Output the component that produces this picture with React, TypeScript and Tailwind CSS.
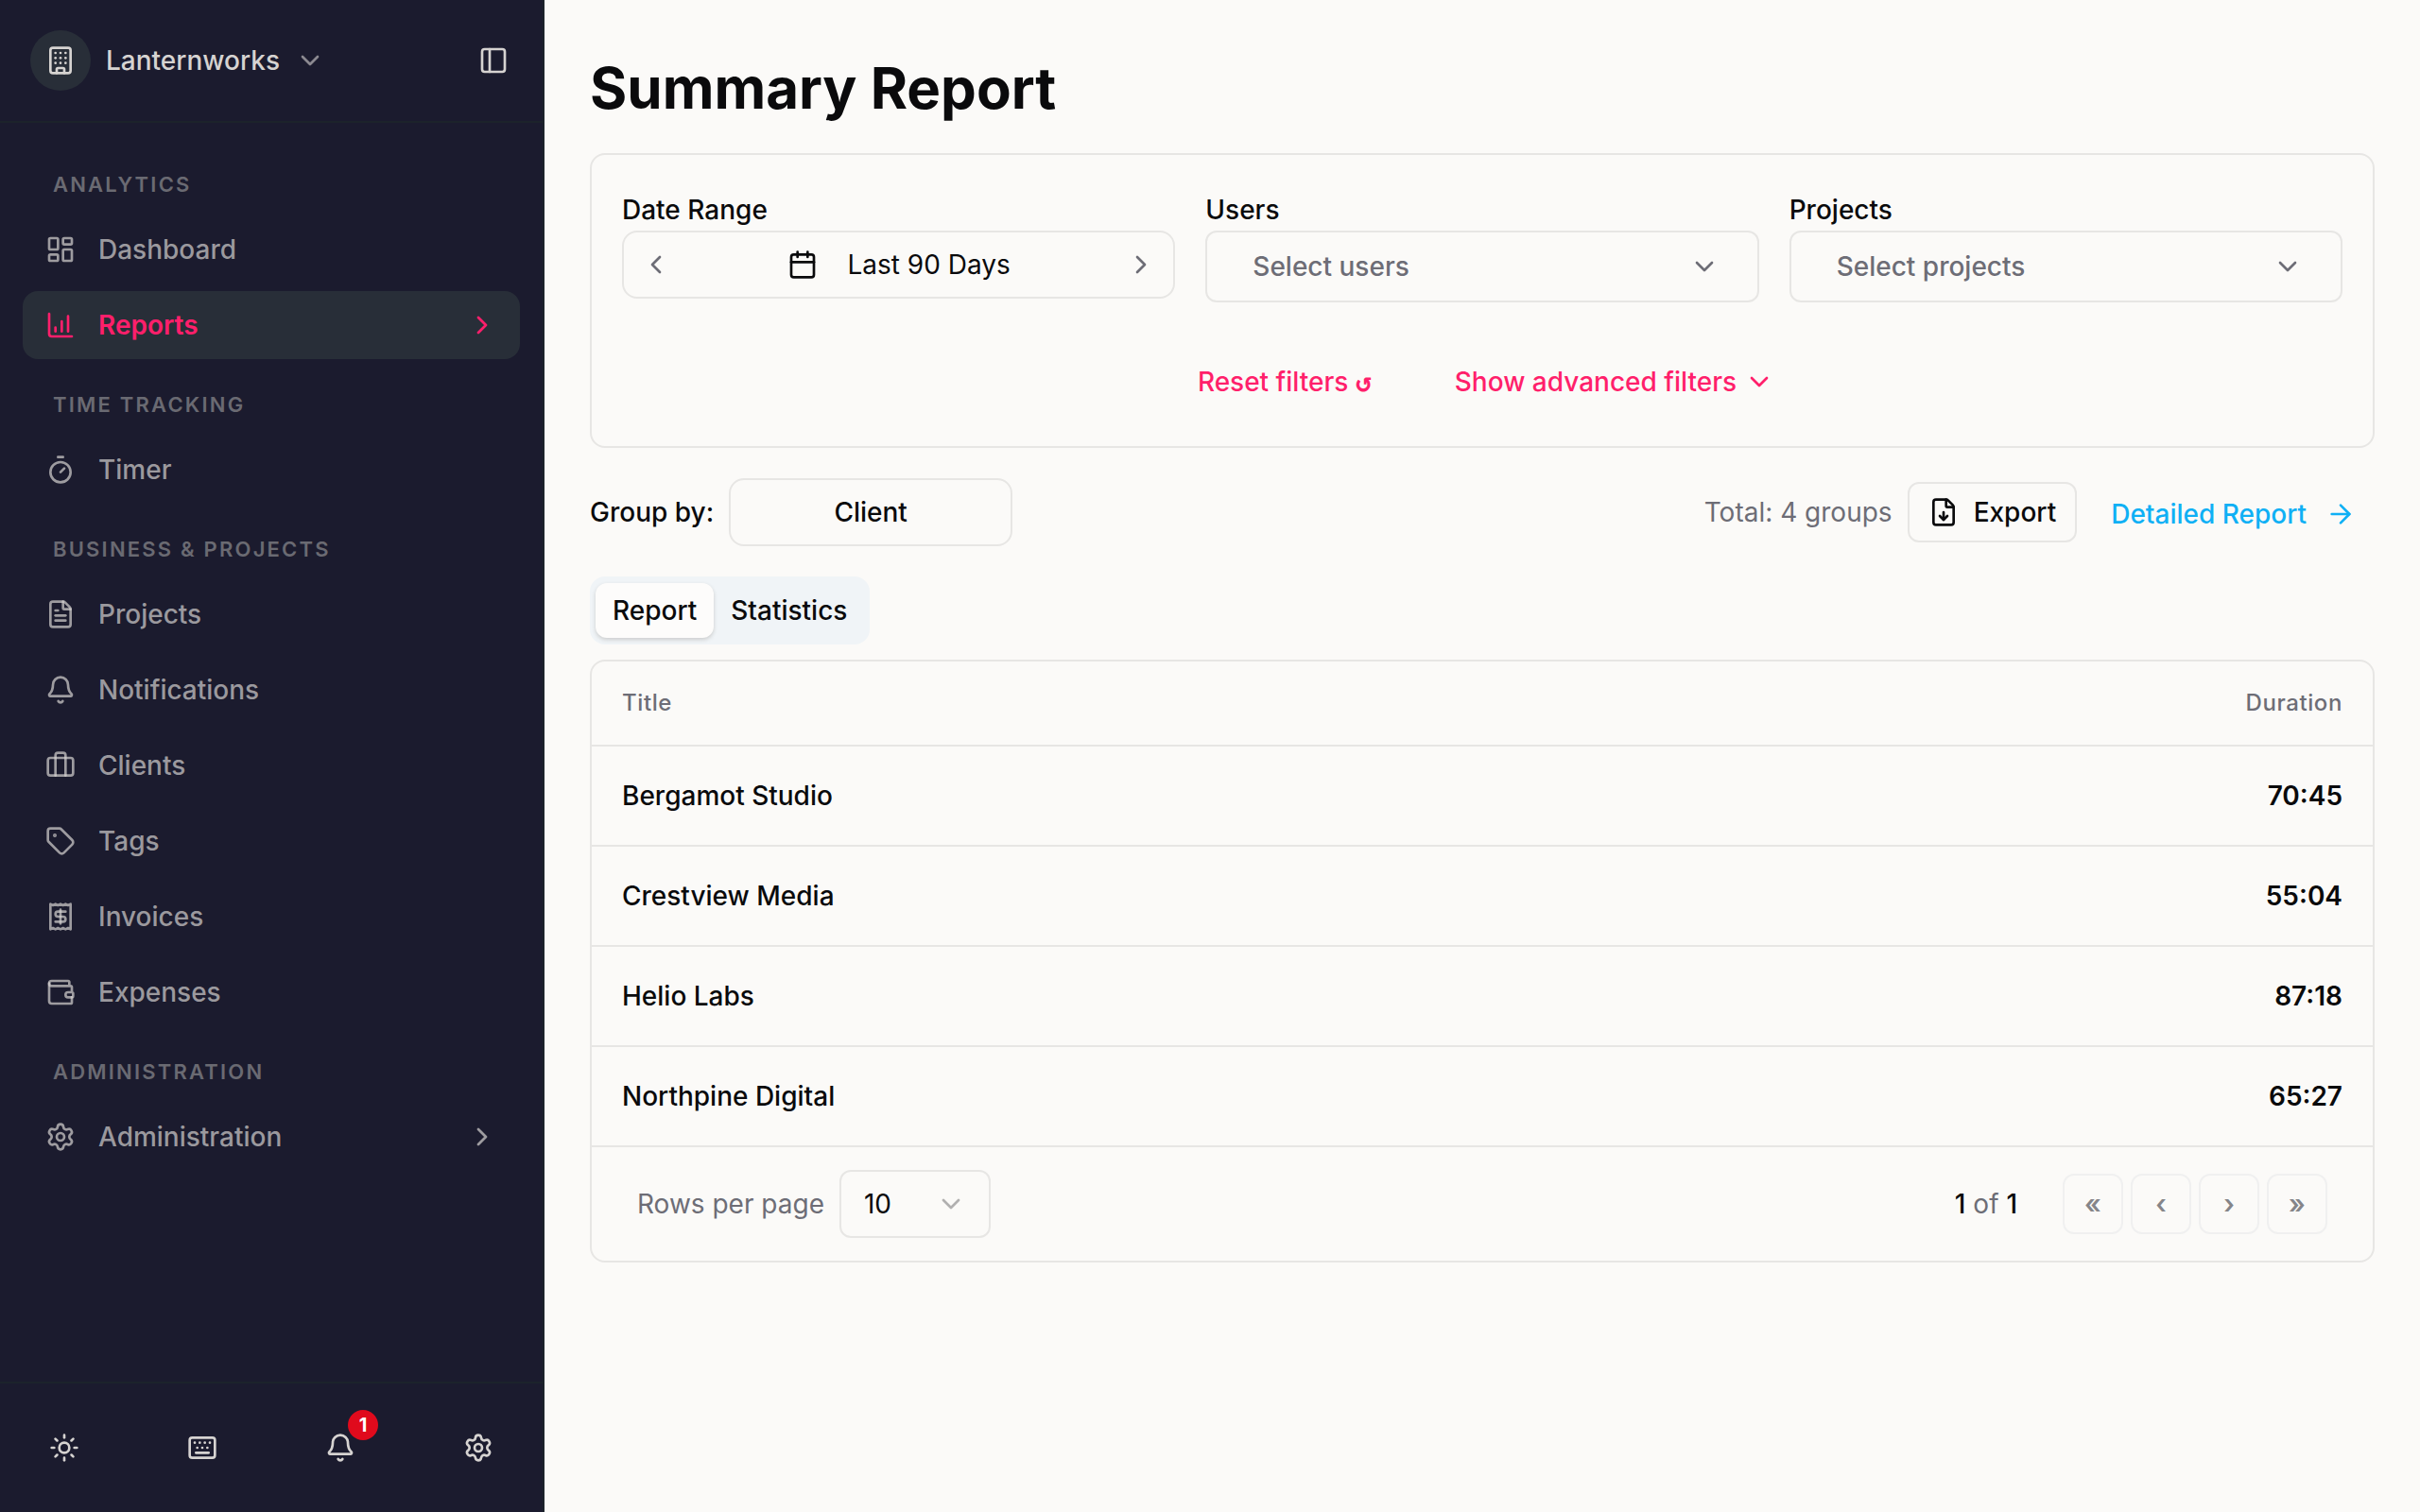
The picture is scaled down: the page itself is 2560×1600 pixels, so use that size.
import type { ReactNode } from 'react'
import {
    ArrowRight,
    Bell,
    Briefcase,
    Building,
    Calendar,
    ChartColumnIncreasing,
    ChevronDown,
    ChevronLeft,
    ChevronRight,
    FileDown,
    FileText,
    Keyboard,
    LayoutDashboard,
    PanelLeft,
    Receipt,
    Settings,
    Sun,
    Tag,
    Timer,
    Wallet,
    type LucideIcon,
} from 'lucide-react'

type NavItem = {
    label: string
    icon: LucideIcon
    active?: boolean
    hasChildren?: boolean
}

const sections: { title: string; items: NavItem[] }[] = [
    {
        title: 'Analytics',
        items: [
            { label: 'Dashboard', icon: LayoutDashboard },
            { label: 'Reports', icon: ChartColumnIncreasing, active: true, hasChildren: true },
        ],
    },
    { title: 'Time Tracking', items: [{ label: 'Timer', icon: Timer }] },
    {
        title: 'Business & Projects',
        items: [
            { label: 'Projects', icon: FileText },
            { label: 'Notifications', icon: Bell },
            { label: 'Clients', icon: Briefcase },
            { label: 'Tags', icon: Tag },
            { label: 'Invoices', icon: Receipt },
            { label: 'Expenses', icon: Wallet },
        ],
    },
    { title: 'Administration', items: [{ label: 'Administration', icon: Settings, hasChildren: true }] },
]

const rows = [
    { title: 'Bergamot Studio', duration: '70:45' },
    { title: 'Crestview Media', duration: '55:04' },
    { title: 'Helio Labs', duration: '87:18' },
    { title: 'Northpine Digital', duration: '65:27' },
]

const pageButtons = [
    { label: 'First page', glyph: '«' },
    { label: 'Previous page', glyph: '‹' },
    { label: 'Next page', glyph: '›' },
    { label: 'Last page', glyph: '»' },
]

function Sidebar() {
    return (
        <aside className="flex w-[576px] shrink-0 flex-col border-r-2 border-[#1c232b] bg-[#1b1b2e] text-[#d6d3d1]">
            <div className="flex h-[130px] items-center justify-between border-b-2 border-[#1c232b] px-8">
                <button className="flex items-center gap-4">
                    <span className="flex size-16 items-center justify-center rounded-full bg-[#282e38]">
                        <Building className="size-8" />
                    </span>
                    <span className="font-medium">Lanternworks</span>
                    <ChevronDown className="size-8 opacity-60" />
                </button>
                <button aria-label="Toggle sidebar" className="p-1">
                    <PanelLeft className="size-8" />
                </button>
            </div>

            <nav className="flex grow flex-col px-6 pt-8">
                {sections.map((section) => (
                    <div key={section.title} className="pb-[15px]">
                        <h2 className="flex h-[66px] items-center px-8 text-[22px] font-semibold tracking-widest text-[#6a6a72] uppercase">
                            {section.title}
                        </h2>
                        <ul className="flex flex-col gap-2">
                            {section.items.map((item) => (
                                <NavLink key={item.label} item={item} />
                            ))}
                        </ul>
                    </div>
                ))}
            </nav>

            <div className="flex h-[138px] items-center justify-between border-t-2 border-[#1c232b] px-8">
                <FooterButton label="Theme" icon={Sun} />
                <FooterButton label="Keyboard shortcuts" icon={Keyboard} />
                <FooterButton label="Notifications" icon={Bell}>
                    <span className="absolute -top-1 -right-1 flex size-8 items-center justify-center rounded-full bg-[#e00a1c] text-xl font-bold text-white">
                        1
                    </span>
                </FooterButton>
                <FooterButton label="Settings" icon={Settings} />
            </div>
        </aside>
    )
}

function NavLink({ item }: { item: NavItem }) {
    const Icon = item.icon
    return (
        <li>
            <a
                href="#"
                className={`flex h-[72px] items-center gap-6 rounded-2xl px-6 ${
                    item.active ? 'bg-[#282e38] font-semibold text-[#ff1f6b]' : 'font-medium text-[#d6d3d1]/70'
                }`}
            >
                <Icon className="size-8" />
                <span className="grow">{item.label}</span>
                {item.hasChildren && <ChevronRight className="size-8" />}
            </a>
        </li>
    )
}

function FooterButton({ label, icon: Icon, children }: { label: string; icon: LucideIcon; children?: ReactNode }) {
    return (
        <button aria-label={label} className="relative flex size-[72px] items-center justify-center">
            <Icon className="size-8" />
            {children}
        </button>
    )
}

function Filters() {
    return (
        <section className="rounded-2xl border-2 border-[#e7e6e4] px-8 pt-[38px] pb-8">
            <div className="grid grid-cols-3 items-start gap-8">
                <div>
                    <p className="pb-0.5 leading-10 font-medium">Date Range</p>
                    <div className="flex h-[72px] items-center justify-between rounded-2xl border-2 border-[#e7e6e4] px-[18px]">
                        <button aria-label="Previous period" className="text-[#6d6d76]">
                            <ChevronLeft className="size-8" />
                        </button>
                        <button className="flex items-center gap-8">
                            <Calendar className="size-8" />
                            Last 90 Days
                        </button>
                        <button aria-label="Next period" className="text-[#6d6d76]">
                            <ChevronRight className="size-8" />
                        </button>
                    </div>
                </div>
                <PickerField id="users" label="Users" placeholder="Select users" />
                <PickerField id="projects" label="Projects" placeholder="Select projects" />
            </div>
            <div className="mt-12 flex h-[72px] items-center justify-center gap-[88px] pl-2 font-medium text-[#ff1f6b]">
                <button>
                    Reset filters <span className="font-['DejaVu_Sans_Mono',monospace] font-bold">↺</span>
                </button>
                <button className="flex items-center gap-2">
                    Show advanced filters
                    <ChevronDown className="size-8" />
                </button>
            </div>
        </section>
    )
}

function PickerField({ id, label, placeholder }: { id: string; label: string; placeholder: string }) {
    return (
        <div>
            <label htmlFor={id} className="block pb-0.5 leading-10 font-medium">
                {label}
            </label>
            <div className="grid items-center text-[#6d6d76]">
                <select
                    id={id}
                    className="col-start-1 row-start-1 h-[76px] appearance-none rounded-xl border-2 border-[#e7e6e4] px-12 font-medium"
                >
                    <option>{placeholder}</option>
                </select>
                <ChevronDown className="pointer-events-none col-start-1 row-start-1 mr-[42px] size-8 justify-self-end" />
            </div>
        </div>
    )
}

function ReportTable() {
    return (
        <div className="mt-4 rounded-2xl border-2 border-[#e7e6e4]">
            <table className="w-full">
                <thead>
                    <tr className="h-[89px] border-b-2 border-[#e7e6e4] text-2xl tracking-wide text-[#6d6d76]">
                        <th className="px-8 text-left font-medium">Title</th>
                        <th className="px-8 text-right font-medium">Duration</th>
                    </tr>
                </thead>
                <tbody>
                    {rows.map((row) => (
                        <tr key={row.title} className="h-[106px] border-b-2 border-[#e7e6e4]">
                            <td className="px-8 font-medium">{row.title}</td>
                            <td className="px-8 text-right font-semibold">{row.duration}</td>
                        </tr>
                    ))}
                </tbody>
            </table>
            <div className="flex items-center justify-between px-12 py-6">
                <div className="flex items-center gap-4">
                    <label htmlFor="page-size" className="text-[#6d6d76]">
                        Rows per page
                    </label>
                    <div className="grid w-40 items-center">
                        <select
                            id="page-size"
                            className="col-start-1 row-start-1 h-[72px] appearance-none rounded-xl border-2 border-[#e7e6e4] px-6"
                        >
                            <option>10</option>
                            <option>25</option>
                            <option>50</option>
                        </select>
                        <ChevronDown className="pointer-events-none col-start-1 row-start-1 mr-[26px] size-8 justify-self-end opacity-30" />
                    </div>
                </div>
                <div className="flex items-center gap-2">
                    <p className="mr-10 text-[#6d6d76]">
                        <span className="font-medium text-[#0a0a0c]">1</span> of{' '}
                        <span className="font-medium text-[#0a0a0c]">1</span>
                    </p>
                    {pageButtons.map((button) => (
                        <button
                            key={button.label}
                            aria-label={button.label}
                            disabled
                            className="size-16 rounded-xl border-2 border-[#f0f0f0] font-semibold text-[#858589]"
                        >
                            {button.glyph}
                        </button>
                    ))}
                </div>
            </div>
        </div>
    )
}

export default function App() {
    return (
        <div className="flex min-h-screen bg-[#fbfaf8] font-['Inter',sans-serif] text-[28px] leading-10 text-[#0a0a0c]">
            <Sidebar />
            <main className="grow px-12 pt-12">
                <h1 className="text-[60px] leading-[90px] font-bold">Summary Report</h1>
                <div className="mt-6">
                    <Filters />
                </div>

                <div className="mt-8 flex items-center">
                    <span className="font-medium">Group by:</span>
                    <button className="ml-4 h-[72px] w-[300px] rounded-2xl border-2 border-[#e7e6e4] font-medium">
                        Client
                    </button>
                    <span className="ml-auto text-[#6d6d76]">Total: 4 groups</span>
                    <button className="ml-4 flex h-16 items-center gap-4 rounded-xl border-2 border-[#e7e6e4] px-5 font-medium">
                        <FileDown className="size-8" />
                        Export
                    </button>
                    <a href="#" className="ml-9 flex items-center gap-5 pt-1 pr-5 font-medium text-[#0fb0f5]">
                        Detailed Report
                        <ArrowRight className="size-8" />
                    </a>
                </div>

                <div role="tablist" className="mt-8 flex h-[72px] w-fit items-center rounded-2xl bg-[#f0f4f7] px-1.5 font-medium">
                    <button
                        role="tab"
                        aria-selected="true"
                        className="h-[58px] rounded-xl bg-[#fdfcfb] px-[18px] shadow-[0_2px_4px_rgba(60,50,40,0.2)]"
                    >
                        Report
                    </button>
                    <button role="tab" aria-selected="false" className="px-[18px]">
                        Statistics
                    </button>
                </div>
                <ReportTable />
            </main>
        </div>
    )
}
